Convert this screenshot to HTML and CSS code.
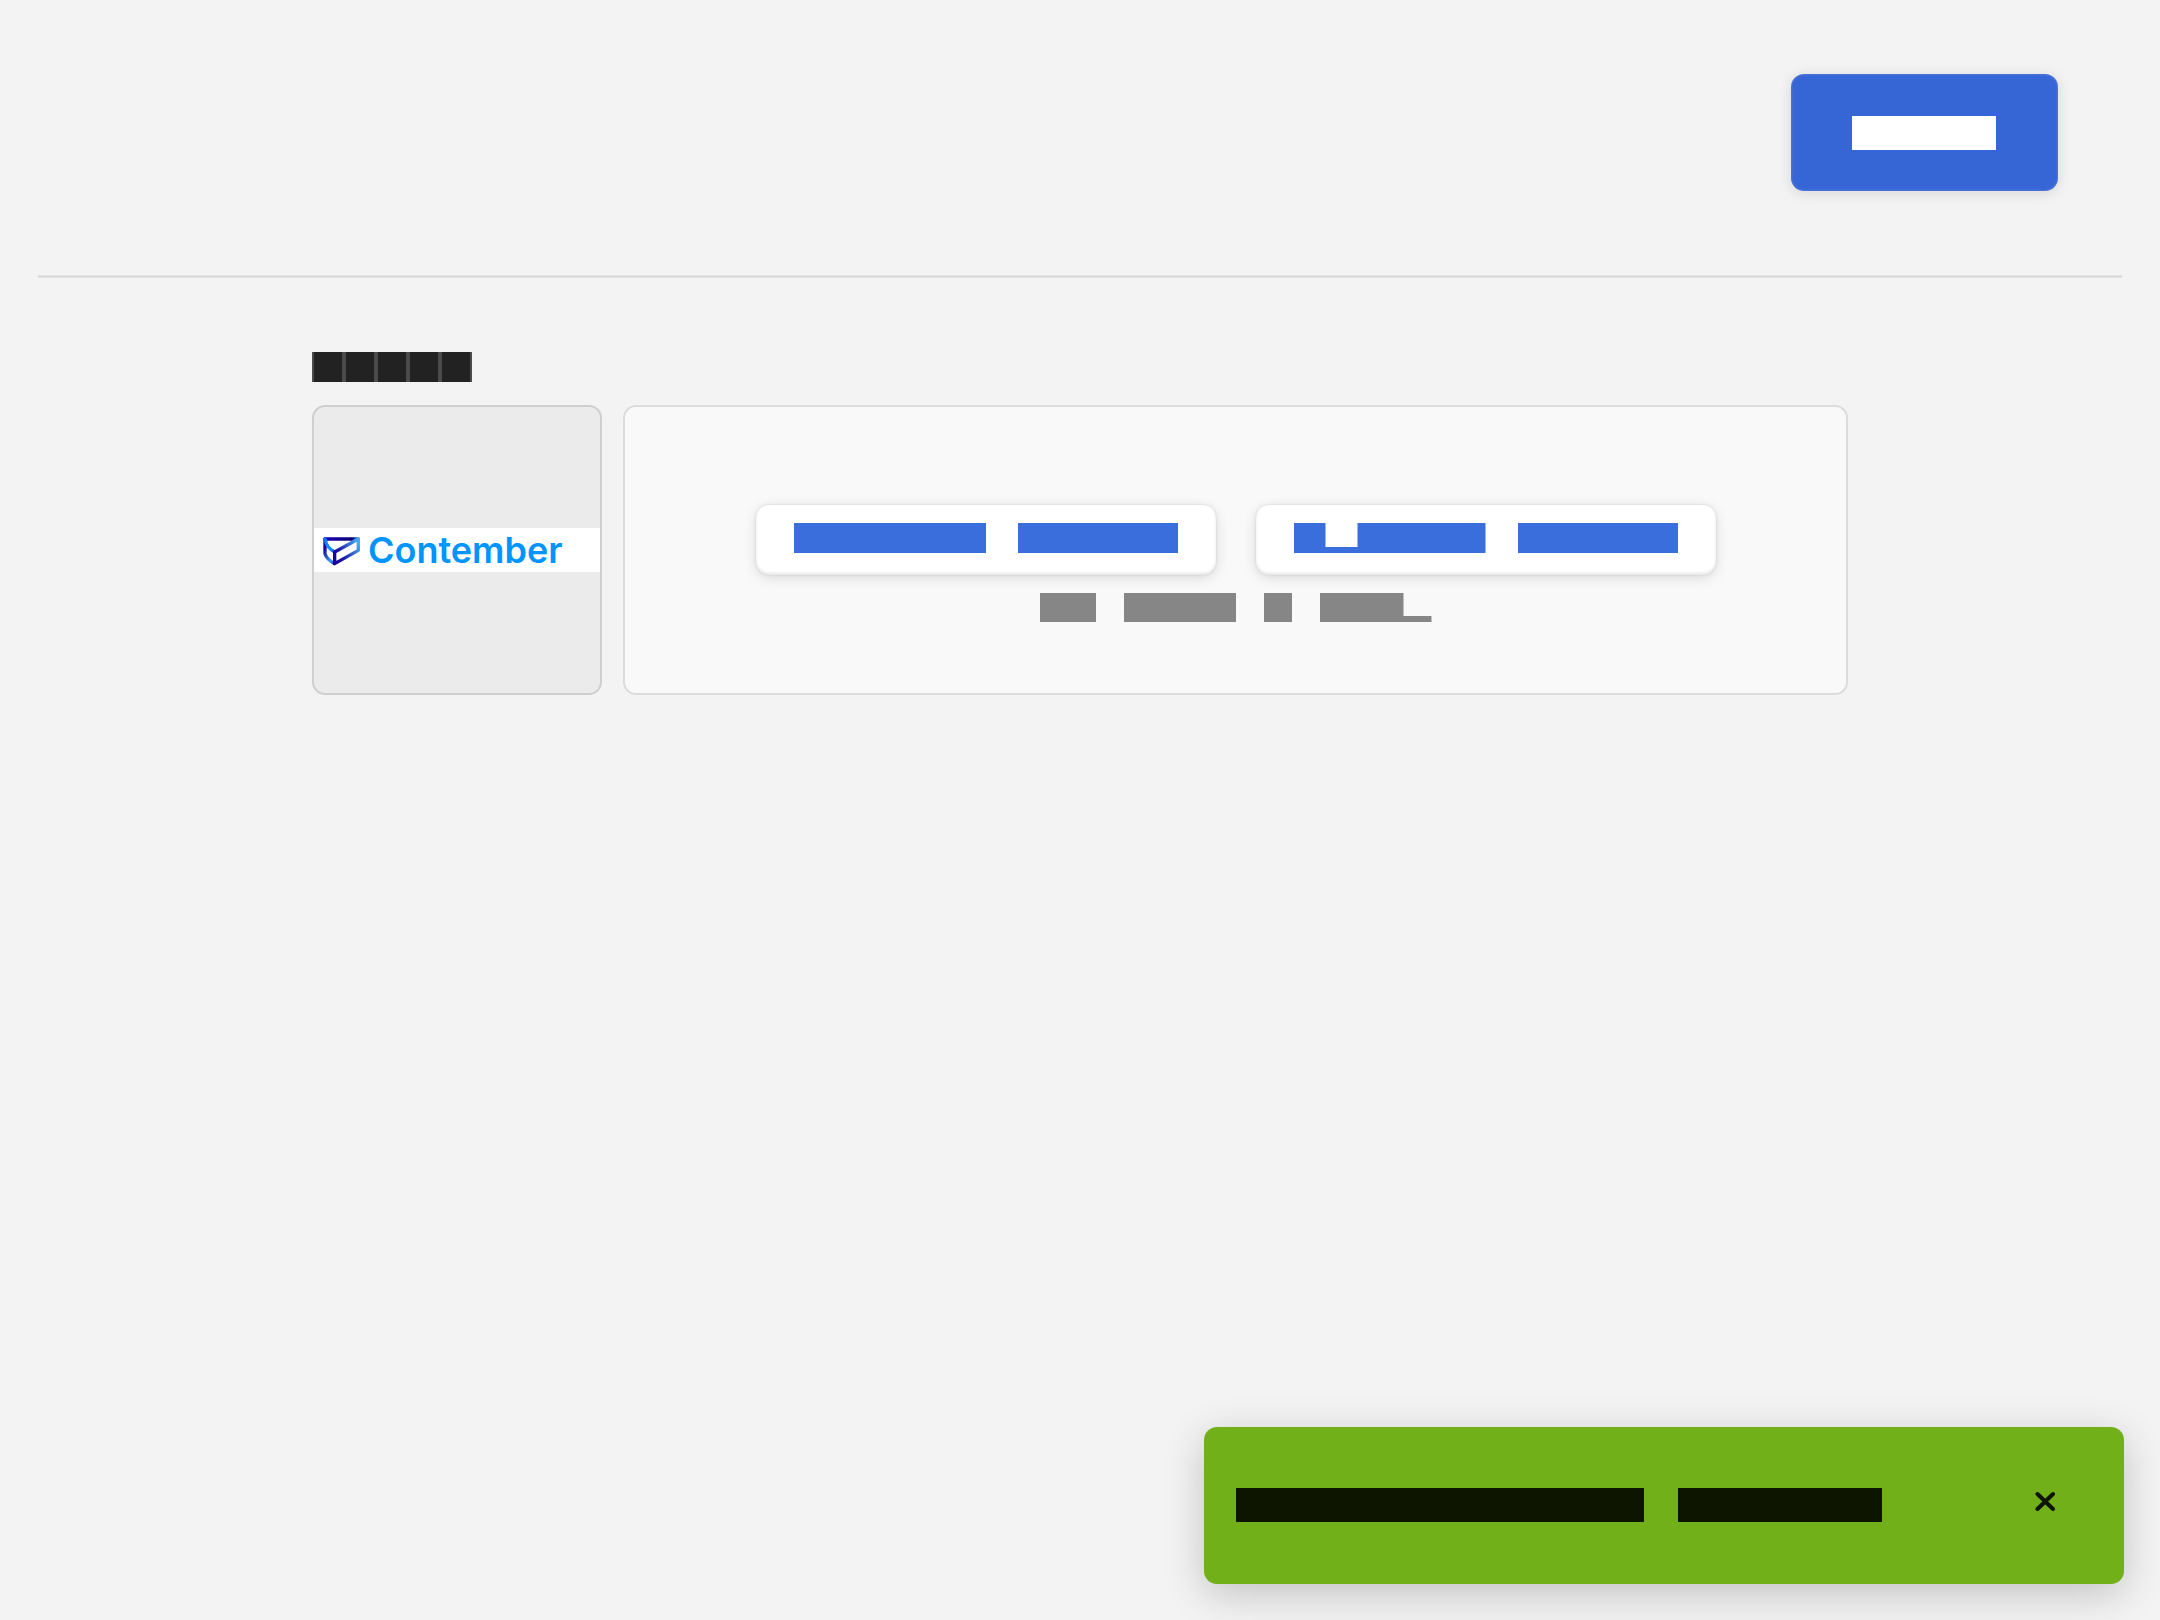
FILE: index.html
```html
<!DOCTYPE html>
<html lang="en">
<head>
<meta charset="utf-8">
<meta name="viewport" content="width=device-width, initial-scale=1">
<title>Contember</title>
<link rel="stylesheet" href="styles.css">
</head>
<body>
<header class="topbar">
  <button class="button button-primary" type="button"><span class="word word-lg chars-6"></span></button>
</header>
<hr class="divider">
<main class="content">
  <div class="label"><span class="letter"></span><span class="letter"></span><span class="letter"></span><span class="letter"></span><span class="letter"></span></div>
  <div class="field">
    <div class="preview">
      <div class="brand">
        <svg class="brand-mark" viewBox="0 -5 120 96" fill="none" stroke-width="10" stroke-linejoin="round" stroke-linecap="round" aria-hidden="true">
          <defs>
            <linearGradient id="top" gradientUnits="userSpaceOnUse" x1="8" y1="10" x2="110" y2="10"><stop offset="0" stop-color="#1a00b4"/><stop offset=".8" stop-color="#0c0078"/><stop offset="1" stop-color="#2a6cc8"/></linearGradient>
            <linearGradient id="left" gradientUnits="userSpaceOnUse" x1="8" y1="40" x2="38" y2="85"><stop offset="0" stop-color="#1a00a0"/><stop offset=".75" stop-color="#3d9cf0"/><stop offset="1" stop-color="#1c18a8"/></linearGradient>
            <linearGradient id="front" gradientUnits="userSpaceOnUse" x1="38" y1="66" x2="110" y2="26"><stop offset="0" stop-color="#1600a0"/><stop offset=".25" stop-color="#1c14a8"/><stop offset="1" stop-color="#46a8f0"/></linearGradient>
            <linearGradient id="fold" gradientUnits="userSpaceOnUse" x1="8" y1="10" x2="38" y2="49"><stop offset="0" stop-color="#0a78f0"/><stop offset=".7" stop-color="#1694ff"/><stop offset="1" stop-color="#2050d0"/></linearGradient>
          </defs>
          <path d="M9 10V54Q14 70 35 82" stroke="url(#left)"/>
          <path d="M9 10H109" stroke="url(#top)"/>
          <path d="M9 10C12 26 24 42 38 49" stroke="url(#fold)"/>
          <path d="M38 84V49L109 10V44Z" stroke="url(#front)"/>
        </svg>
        <span class="brand-name">Contember</span>
      </div>
    </div>
    <div class="dropzone">
      <div class="actions">
        <button class="button button-light" type="button"><span class="word word-md chars-6"></span><span class="word word-md chars-5"></span></button>
        <button class="button button-light" type="button"><span class="word word-md chars-6 dip"></span><span class="word word-md chars-5"></span></button>
      </div>
      <div class="hint"><span class="word word-sm chars-2"></span><span class="word word-sm chars-4"></span><span class="word word-sm chars-1"></span><span class="word word-sm chars-4 tail"></span></div>
    </div>
  </div>
</main>
<div class="toast" role="status">
  <div class="toast-message"><span class="word word-lg chars-12"></span><span class="word word-lg chars-6"></span></div>
  <button class="toast-close" type="button">
    <svg class="close-icon" viewBox="0 0 20 20" fill="none" stroke="currentColor" stroke-width="4" stroke-linecap="round" aria-hidden="true"><path d="M2.5 3L18 18M18 3L2.5 18"/></svg>
  </button>
</div>
</body>
</html>
```

FILE: styles.css
```css
*, *::before, *::after { box-sizing: border-box; }

body {
  margin: 0;
  min-height: 100vh;
  background: #f3f3f3;
  color: #222;
  font-family: Inter, "Liberation Sans", sans-serif;
}

button {
  border: 0;
  font: inherit;
  cursor: pointer;
}

/* Solid word blocks: every letter is one em wide */
.word {
  display: block;
  width: calc(var(--em) * var(--chars));
  height: var(--line);
  background: currentColor;
}
.word-lg { --em: 34px; --line: 34px; }
.word-md { --em: 32px; --line: 30px; }
.word-sm { --em: 28px; --line: 29px; }
.chars-1 { --chars: 1; }
.chars-2 { --chars: 2; }
.chars-4 { --chars: 4; }
.chars-5 { --chars: 5; }
.chars-6 { --chars: 6; }
.chars-12 { --chars: 12; }
.dip { clip-path: polygon(0 0, 32px 0, 32px 24px, 64px 24px, 64px 0, 100% 0, 100% 100%, 0 100%); }
.tail { clip-path: polygon(0 0, 84px 0, 84px 23px, 100% 23px, 100% 100%, 0 100%); }

.topbar {
  display: flex;
  justify-content: flex-end;
  padding: 74px 102px 84px;
}

.button {
  display: flex;
  border-radius: 13px;
}
.button-primary {
  padding: 42px 62px 41px 61px;
  background: #3665d5;
  color: #fff;
  box-shadow: 0 2px 14px rgba(0, 0, 0, .12), inset 0 0 3px rgba(255, 255, 255, .25);
}
.button-primary .word { --em: 24px; }

.divider {
  height: 3px;
  margin: 0 38px;
  border: solid #e4e4e4;
  border-width: 1px 0;
  background: #d4d4d4;
}

.content {
  max-width: 1536px;
  margin: 0 auto;
  padding-top: 74px;
}

.label { display: flex; }
.letter {
  width: 32px;
  height: 30px;
  border: solid #4b4b4b;
  border-width: 0 2px;
  background: #222;
}

.field {
  display: flex;
  gap: 21px;
  margin-top: 23px;
}
.preview, .dropzone {
  display: flex;
  justify-content: center;
  height: 290px;
  border: 2px solid #dcdcdc;
  border-radius: 13px;
}
.preview {
  flex: 0 0 290px;
  align-items: center;
  border-color: #cfcfcf;
  background: #ebebeb;
}
.brand {
  display: flex;
  align-items: center;
  gap: 6px;
  width: 100%;
  height: 44px;
  padding-left: 8px;
  background: #fff;
}
.brand-mark { width: 40px; height: 32px; }
.brand-name {
  color: #0094ff;
  font-size: 36px;
  font-weight: 600;
  line-height: 44px;
}

.dropzone {
  flex: 1;
  flex-direction: column;
  align-items: center;
  gap: 18px;
  padding-top: 27px;
  background: #f9f9f9;
}
.actions {
  display: flex;
  gap: 40px;
}
.button-light {
  gap: 32px;
  padding: 18px 38px 22px;
  background: #fff;
  color: #3b6edd;
  box-shadow: 0 3px 14px rgba(0, 0, 0, .12), 0 0 3px rgba(0, 0, 0, .12), inset 0 -2px 3px rgba(0, 0, 0, .1);
}
.hint {
  display: flex;
  gap: 28px;
  color: #868686;
}

.toast {
  position: fixed;
  right: 36px;
  bottom: 36px;
  display: flex;
  align-items: center;
  justify-content: space-between;
  width: 920px;
  max-width: calc(100% - 72px);
  padding: 51px 60px 52px 32px;
  border-radius: 13px;
  background: #71b019;
  color: #0d1500;
  box-shadow: 0 10px 40px rgba(0, 0, 0, .2);
}
.toast-message {
  display: flex;
  gap: 34px;
  padding: 10px 0;
}
.toast-close {
  display: flex;
  padding: 8px 9px 16px;
  background: transparent;
  color: inherit;
}
.close-icon { width: 20px; height: 20px; }
```
